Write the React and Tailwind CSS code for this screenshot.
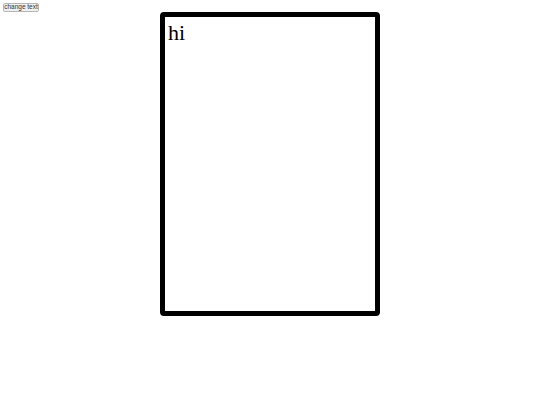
export default function App() {
  return (
    <div className="flex flex-col items-start">
      <button className="ml-[3px] mt-[3px] h-[9px] w-[36px] rounded-[2px] border border-[#b5b5b5] bg-[#f0f0f0] text-[6.5px] leading-none text-[#333] font-['Liberation_Sans',sans-serif]">
        change text
      </button>
      <div className="ml-[160px] h-[304px] w-[220px] rounded-[4px] border-[5px] border-black px-[3px] py-[5px]">
        <div className="text-[22px] leading-none font-['Liberation_Serif',serif] text-black">hi</div>
      </div>
    </div>
  );
}
